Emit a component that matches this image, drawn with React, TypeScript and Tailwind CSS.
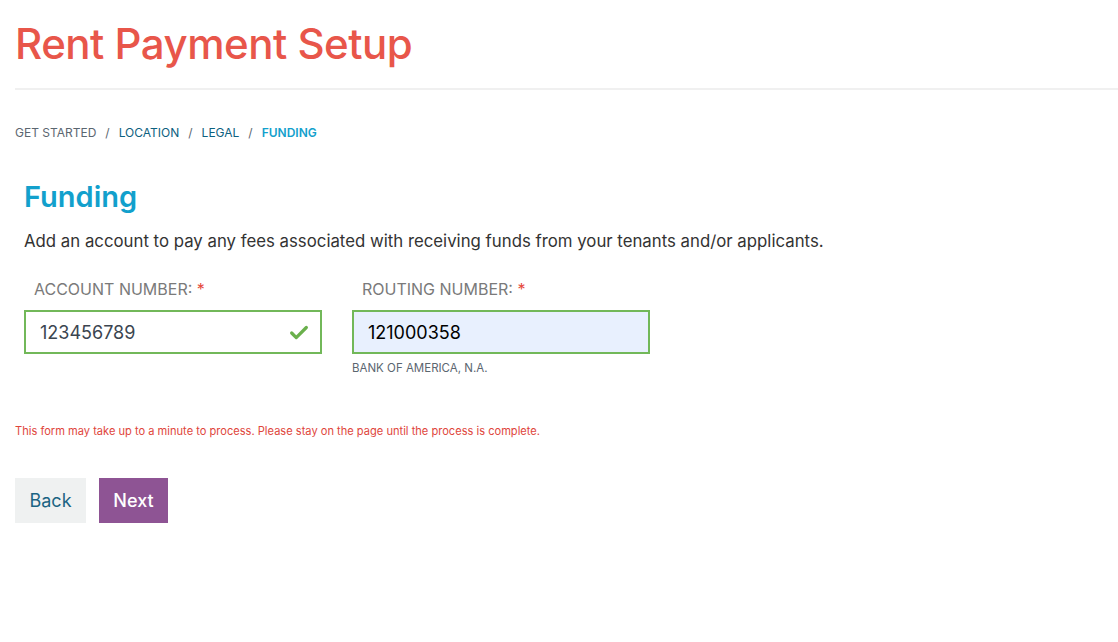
import { Check } from "lucide-react";

const crumbs = [
  { label: "Get Started", tone: "text-[#5b6670]" },
  { label: "Location", tone: "text-[#0d6180]" },
  { label: "Legal", tone: "text-[#0d6180]" },
];

function Field(props: { label: string; value: string; valid?: boolean; filled?: boolean; hint?: string }) {
  return (
    <div className="w-[298px]">
      <label className="block pl-[10px] mb-[10px] text-[16px] uppercase text-[#7a7a7a] leading-[22px]">
        {props.label}: <span className="text-[#e5483b]">*</span>
      </label>
      <div
        className={`relative h-[44px] border-2 border-[#72b859] flex items-center pl-[14px] ${
          props.filled ? "bg-[#e8f0fe]" : "bg-white"
        }`}
      >
        <span className={`text-[18px] ${props.filled ? "text-black" : "text-[#3b4550]"}`}>{props.value}</span>
        {props.valid && (
          <Check className="absolute right-[10px] top-[10px] w-[22px] h-[22px] text-[#6ab04c]" strokeWidth={3.5} />
        )}
      </div>
      {props.hint && <p className="mt-[6px] text-[11.5px] uppercase text-[#5b6670]">{props.hint}</p>}
    </div>
  );
}

export default function App() {
  return (
    <div className="min-h-[642px] bg-white px-[15px] font-['Inter','Liberation_Sans',sans-serif]">
      <h1 className="pt-[18px] pb-[18px] text-[42px] leading-[52px] font-medium text-[#e8564a] tracking-[-0.5px]">
        Rent Payment Setup
      </h1>
      <hr className="border-t-[2px] border-[#f0f0f0] -mr-[15px]" />

      <nav className="mt-[34px] flex items-center text-[12px] uppercase">
        {crumbs.map((c) => (
          <span key={c.label} className="flex items-center">
            <span className={c.tone}>{c.label}</span>
            <span className="mx-[9px] text-[#5b6670]">/</span>
          </span>
        ))}
        <span className="font-semibold text-[#12a0cc]">Funding</span>
      </nav>

      <section className="pl-[9px] mt-[38px]">
        <h2 className="text-[29px] leading-[34px] font-semibold text-[#12a0cc]">Funding</h2>
        <p className="mt-[15px] text-[16.8px] text-[#333]">
          Add an account to pay any fees associated with receiving funds from your tenants and/or applicants.
        </p>

        <div className="mt-[24px] flex gap-[30px]">
          <Field label="Account Number" value="123456789" valid />
          <Field label="Routing Number" value="121000358" filled hint="Bank of America, N.A." />
        </div>
      </section>

      <p className="mt-[46px] text-[11.1px] text-[#e0463c]">
        This form may take up to a minute to process. Please stay on the page until the process is complete.
      </p>

      <div className="mt-[38px] flex gap-[13px]">
        <button className="h-[45px] w-[71px] bg-[#eff1f1] text-[18px] text-[#1b6483]">Back</button>
        <button className="h-[45px] w-[69px] bg-[#8e5494] text-[18px] font-medium text-white">Next</button>
      </div>
    </div>
  );
}
